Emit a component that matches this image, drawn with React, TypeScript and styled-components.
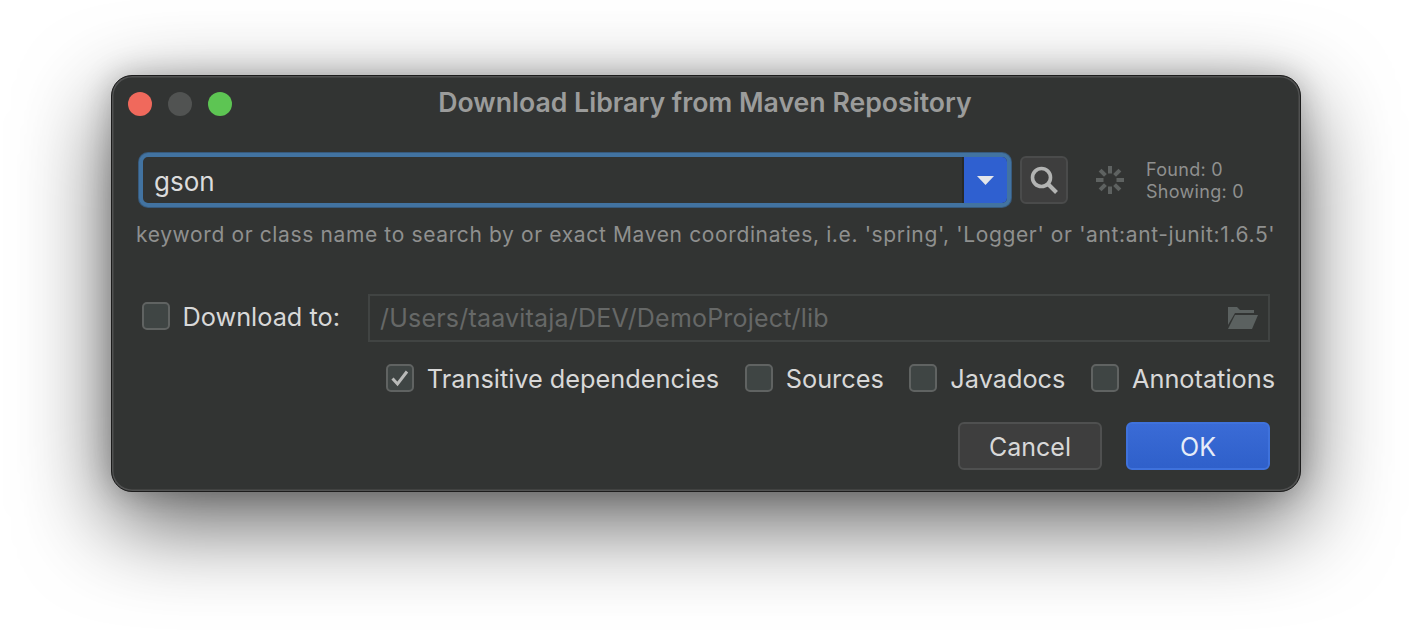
import React from 'react';
import styled, { createGlobalStyle } from 'styled-components';

const Global = createGlobalStyle`
  html, body { margin: 0; padding: 0; background: #fff; overflow: hidden; }
  * { box-sizing: border-box; }
`;

const Stage = styled.div`
  width: 1412px;
  height: 640px;
  padding: 75px 111px 0;
  background: #fff;
  font-family: Inter, "Liberation Sans", sans-serif;
`;

const Window = styled.div`
  width: 1190px;
  height: 417px;
  border-radius: 21px;
  background: #323433;
  border: 1px solid #1c1c1c;
  box-shadow: inset 0 0 0 1.5px #505151, 0 30px 90px rgba(0, 0, 0, 0.64), 0 0 30px rgba(0, 0, 0, 0.22);
  padding: 2px 30px 0 29px;
  display: flex;
  flex-direction: column;
`;

const TitleBar = styled.div`
  height: 52px;
  margin: 0 -30px 0 -29px;
  padding: 0 16px;
  display: grid;
  grid-template-columns: 1fr auto 1fr;
  align-items: center;
`;

const Lights = styled.div`
  display: flex;
  gap: 16px;
`;

const Light = styled.span<{ $c: string }>`
  width: 24px;
  height: 24px;
  border-radius: 50%;
  background: ${(p) => p.$c};
`;

const Title = styled.div`
  font-size: 26.65px;
  font-weight: 600;
  color: #9b9c9b;
  padding-bottom: 5px;
  transform: translateX(-1px);
`;

const SearchRow = styled.div`
  margin-top: 22px;
  margin-left: -2px;
  height: 56px;
  display: flex;
  align-items: center;
`;

const Combo = styled.div`
  width: 872px;
  height: 54px;
  border: 4px solid #4273a1;
  box-shadow: 0 0 0 1px #375a7d;
  border-radius: 9px;
  display: flex;
  overflow: hidden;
  background: #323433;
`;

const ComboText = styled.div`
  flex: 1;
  padding: 4px 0 0 11px;
  font-size: 26px;
  line-height: 42px;
  color: #dcdcdc;
`;

const ComboArrow = styled.div`
  width: 45px;
  background: #2f60d0;
  border-left: 2px solid #272928;
  display: flex;
  align-items: center;
  justify-content: center;
`;

const SearchButton = styled.div`
  margin-left: 9px;
  width: 48px;
  height: 48px;
  border-radius: 6px;
  border: 2px solid #4a4b4b;
  background: #3e3e3e;
  display: flex;
  align-items: center;
  justify-content: center;
`;

const Spinner = styled.svg`
  margin-left: 28px;
  flex: none;
`;

const Counts = styled.div`
  margin-left: 22px;
  padding-top: 2px;
  font-size: 18px;
  line-height: 22px;
  color: #8f908f;
  letter-spacing: 0.3px;
`;

const Hint = styled.div`
  margin: 14px 0 0 -5px;
  font-size: 21px;
  line-height: 26px;
  color: #8f908f;
  white-space: nowrap;
  letter-spacing: 0.63px;
`;

const DownloadRow = styled.div`
  margin-top: 46px;
  height: 48px;
  display: flex;
  align-items: center;
`;

const Box = styled.span`
  flex: none;
  width: 28px;
  height: 28px;
  border-radius: 5px;
  background: #3f4544;
  border: 2px solid #606362;
  display: flex;
  align-items: center;
  justify-content: center;
`;

const Option = styled.div`
  display: flex;
  align-items: center;
  gap: 13px;
  font-size: 25.3px;
  color: #d8d8d8;
  white-space: nowrap;
`;

const DownloadLabel = styled(Option)`
  margin-left: 1px;
  width: 226px;
  padding-bottom: 4px;
  gap: 12.5px;
`;

const PathField = styled.div`
  width: 902px;
  height: 48px;
  border: 2px solid #414443;
  padding: 0 10px;
  display: flex;
  align-items: center;
  justify-content: space-between;
  font-size: 25px;
  letter-spacing: 0.2px;
  color: #666867;
`;

const OptionsRow = styled.div`
  margin-top: 22px;
  height: 28px;
  margin-right: -5px;
  display: flex;
  justify-content: flex-end;
  gap: 25.6px;
`;

const ButtonRow = styled.div`
  margin-top: 30px;
  display: flex;
  justify-content: flex-end;
  gap: 24px;
`;

const Button = styled.div<{ $primary?: boolean }>`
  width: 144px;
  height: 48px;
  border-radius: 6px;
  padding-top: 1px;
  font-size: 25px;
  display: flex;
  align-items: center;
  justify-content: center;
  color: ${(p) => (p.$primary ? '#e6ecf8' : '#d8d8d8')};
  background: ${(p) => (p.$primary ? 'linear-gradient(#3a6bd6, #2f60ca)' : '#3e3e3e')};
  border: 2px solid ${(p) => (p.$primary ? '#3f72dc' : '#4f5050')};
`;

const spokes = [0, 45, 90, 135, 180, 225, 270, 315];

export default function App() {
  return (
    <Stage>
      <Global />
      <Window>
        <TitleBar>
          <Lights>
            <Light $c="#f0695c" />
            <Light $c="#515352" />
            <Light $c="#5dc553" />
          </Lights>
          <Title>Download Library from Maven Repository</Title>
          <span />
        </TitleBar>
        <SearchRow>
          <Combo>
            <ComboText>gson</ComboText>
            <ComboArrow>
              <svg width="17" height="9" viewBox="0 0 17 9">
                <path d="M0 0H17L8.5 9Z" fill="#e4e6ea" />
              </svg>
            </ComboArrow>
          </Combo>
          <SearchButton>
            <svg width="30" height="30" viewBox="0 0 30 30" fill="none">
              <circle cx="12.5" cy="12.5" r="9" stroke="#b3b4b3" strokeWidth="3.6" />
              <path d="M19 19L27.5 27.5" stroke="#b3b4b3" strokeWidth="4" />
            </svg>
          </SearchButton>
          <Spinner width="28" height="28" viewBox="0 0 28 28">
            {spokes.map((a) => (
              <rect key={a} x="12" y="0" width="4" height="7.5" fill="#5e6261" transform={`rotate(${a} 14 14)`} />
            ))}
          </Spinner>
          <Counts>
            Found: 0
            <br />
            Showing: 0
          </Counts>
        </SearchRow>
        <Hint>keyword or class name to search by or exact Maven coordinates, i.e. 'spring', 'Logger' or 'ant:ant-junit:1.6.5'</Hint>
        <DownloadRow>
          <DownloadLabel>
            <Box />
            Download to:
          </DownloadLabel>
          <PathField>
            /Users/taavitaja/DEV/DemoProject/lib
            <svg width="30" height="22" viewBox="0 0 30 22">
              <path d="M0 0H9L12 3H26V6H7L0 18Z" fill="#5b6160" />
              <path d="M7 8H30L24 22H0Z" fill="#5b6160" />
            </svg>
          </PathField>
        </DownloadRow>
        <OptionsRow>
          <Option>
            <Box>
              <svg width="20" height="18" viewBox="0 0 20 18" fill="none">
                <path d="M2.5 9.5L7.5 15L17 2.5" stroke="#b9bab9" strokeWidth="3" />
              </svg>
            </Box>
            Transitive dependencies
          </Option>
          <Option>
            <Box />
            Sources
          </Option>
          <Option>
            <Box />
            Javadocs
          </Option>
          <Option>
            <Box />
            Annotations
          </Option>
        </OptionsRow>
        <ButtonRow>
          <Button>Cancel</Button>
          <Button $primary>OK</Button>
        </ButtonRow>
      </Window>
    </Stage>
  );
}
